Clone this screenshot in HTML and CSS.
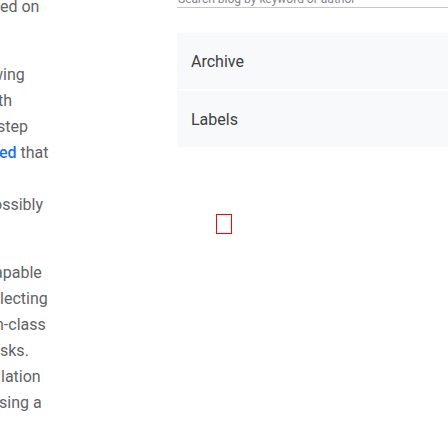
FILE: index.html
```html
<!DOCTYPE html>
<html>
<head>
<meta charset="utf-8">
<link rel="stylesheet" href="styles.css">
</head>
<body>
<div class="page">
  <div class="post">
    <p class="para">
      <span class="line">ed on</span>
    </p>
    <p class="para">
      <span class="line"></span>
      <span class="line o-w">wing</span>
      <span class="line o-2">th</span>
      <span class="line o-3">step</span>
      <span class="line o-1"><a class="link">ed</a> that</span>
      <span class="line"></span>
      <span class="line o-o">ossibly</span>
      <span class="line"></span>
    </p>
    <p class="para">
      <span class="line o-a">apable</span>
      <span class="line">lecting</span>
      <span class="line o-n">n-class</span>
      <span class="line">sks.</span>
      <span class="line p-1">lation</span>
      <span class="line o-1">sing a</span>
    </p>
  </div>
  <aside class="sidebar">
    <div class="search">Search blog by keyword or author</div>
    <div class="panels">
      <div class="panel">Archive</div>
      <div class="panel">Labels</div>
    </div>
    <div class="missing"></div>
  </aside>
</div>
</body>
</html>
```
FILE: styles.css
```css
html, body {
  margin: 0;
  padding: 0;
  background: #ffffff;
  overflow: hidden;
}
body {
  width: 448px;
  height: 448px;
  font-family: Roboto, "Liberation Sans", sans-serif;
}
.page {
  display: flex;
  align-items: flex-start;
}
.post {
  width: 177px;
  flex: none;
  overflow: hidden;
  margin-top: -6px;
  color: #5f6368;
  font-size: 16px;
  line-height: 26px;
}
.para {
  margin: 0 0 16px 0;
}
.line {
  display: block;
  height: 26px;
  white-space: nowrap;
}
.link {
  color: #1a73e8;
  font-weight: 500;
}
.o-1 { margin-left: -1px; }
.o-2 { margin-left: -2px; }
.o-3 { margin-left: -3px; }
.o-w { margin-left: -9px; }
.o-o { margin-left: -7px; }
.o-a { margin-left: -6px; }
.o-n { margin-left: -5px; }
.p-1 { margin-left: 1px; }
.sidebar {
  flex: 1;
  margin-top: -13px;
}
.search {
  padding: 4px 0 0 1px;
  height: 16px;
  line-height: 16px;
  font-size: 12px;
  color: #80868b;
  border-bottom: 1px solid #c4c7c5;
  white-space: nowrap;
}
.panels {
  margin-top: 25px;
  display: flex;
  flex-direction: column;
  gap: 2px;
}
.panel {
  height: 56px;
  display: flex;
  align-items: center;
  padding: 0 14px;
  background: #f8f9fa;
  color: #3c4043;
  font-size: 16px;
}
.missing {
  width: 14px;
  height: 18px;
  border: 1px solid #ff0000;
  margin: 67px 0 0 39px;
}
```
